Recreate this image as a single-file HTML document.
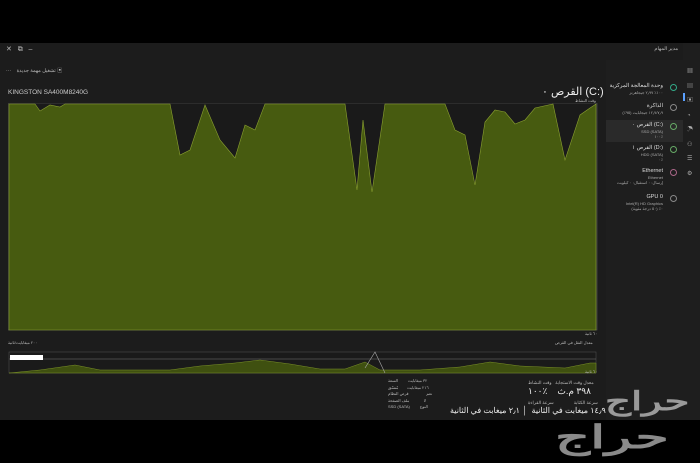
<!DOCTYPE html>
<html><head><meta charset="utf-8"><style>
body{margin:0;width:700px;height:463px;background:#000;overflow:hidden;font-family:"Liberation Sans","Noto Sans CJK SC",sans-serif;color:#ddd;position:relative}
.win{position:absolute;left:0;top:43px;width:700px;height:377px;background:#1c1c1c}
.t{position:absolute;font-size:5px;color:#bbb;white-space:nowrap}
.side{position:absolute;left:606px;top:60px;width:77px;height:360px;background:#1e1e1e}
.icons{position:absolute;left:683px;top:43px;width:17px;height:377px;background:#1e1e1e}
.item{position:absolute;right:20px;text-align:right;font-size:5.5px;color:#ddd;line-height:7px;white-space:nowrap}
.item small{display:block;font-size:4px;color:#aaa;line-height:5px}
.dot{position:absolute;right:6px;width:5px;height:5px;border-radius:50%;border:1px solid #6a8;}
.wm{position:absolute;color:#9a9a9a;font-weight:bold;font-family:"Liberation Sans","Noto Sans CJK SC",sans-serif;transform-origin:0 0;white-space:nowrap}
</style></head><body>
<div class="win">
<div class="t" style="left:6px;top:2px;font-size:7px">✕ &nbsp; ⧉ &nbsp; –</div>
<div class="t" style="right:22px;top:3px">مدير المهام</div>
<div style="position:absolute;right:6px;top:4px;width:6px;height:5px;background:#4a7fd0"></div>
<div class="t" style="left:6px;top:24px">··· &nbsp;&nbsp; تشغيل مهمة جديدة ▣</div>
<div class="t" style="right:22px;top:24px">الأداء</div>
<div class="t" style="left:8px;top:46px;font-size:6.5px;color:#ccc">KINGSTON SA400M8240G</div>
<div class="t" style="left:542px;top:42px;font-size:11px;color:#eee">القرص ٠ (C:)</div>
<div class="t" style="left:575px;top:55px;font-size:4px">وقت النشاط</div>
<svg style="position:absolute;left:8px;top:60px" width="590" height="230" viewBox="8 103 590 230">
<rect x="8" y="103" width="589" height="227" fill="#1a1a1a" stroke="#555" stroke-width="0.6"/>
<polygon fill="#475b10" stroke="#8aa030" stroke-width="0.6" points="9,104 35,104 40,111 50,105 60,107 65,104 170,104 180,155 190,150 205,105 220,140 235,158 245,125 255,130 265,104 345,104 357,190 363,120 372,192 385,104 445,104 455,130 465,135 475,185 485,122 495,110 505,112 515,124 525,120 535,108 553,104 565,160 580,115 590,108 596,104 596,330 9,330"/>
</svg>
<div class="t" style="left:585px;top:288px;font-size:4px">٦٠ ثانية</div>
<div class="t" style="left:8px;top:297px;font-size:4px">٢٠٠ ميغابايت/ثانية</div>
<div class="t" style="left:555px;top:297px;font-size:4px">معدل النقل في القرص</div>
<svg style="position:absolute;left:8px;top:302px" width="590" height="30" viewBox="8 345 590 30">
<rect x="9" y="352" width="587" height="21" fill="#1a1a1a" stroke="#555" stroke-width="0.5"/>
<line x1="9" y1="359" x2="596" y2="359" stroke="#777" stroke-width="0.5"/>
<polygon fill="#3f5010" stroke="#7a9028" stroke-width="0.5" points="9,373 40,370 75,365 100,370 170,370 200,366 235,363 260,360 290,364 320,369 345,369 365,362 380,370 420,370 460,367 490,362 520,366 565,368 590,363 596,363 596,373"/>
<polyline fill="none" stroke="#aaa" stroke-width="0.6" points="365,368 375,352 385,373"/>
<rect x="10" y="355" width="33" height="5" fill="#fff"/>
</svg>
<div class="t" style="left:585px;top:326px;font-size:4px">٦٠ ثانية</div>
<div class="t" style="left:528px;top:337px;font-size:4.5px">معدل وقت الاستجابة &nbsp; وقت النشاط</div>
<div class="t" style="left:528px;top:343px;font-size:9px;color:#eee">٣٩٨ م.ث &nbsp;&nbsp; ٪١٠٠</div>
<div class="t" style="left:528px;top:357px;font-size:4.5px">سرعة الكتابة &nbsp;&nbsp;&nbsp;&nbsp;&nbsp;&nbsp;&nbsp;&nbsp;&nbsp;&nbsp;&nbsp;&nbsp;&nbsp;&nbsp; سرعة القراءة</div>
<div class="t" style="left:450px;top:363px;font-size:8px;color:#eee">١٤٫٩ ميغابت في الثانية &nbsp;│ ٢٫١ ميغابت في الثانية</div>
<div class="t" style="left:388px;top:335px;font-size:4px;line-height:6.5px">٣٢ ميغابايت &nbsp;&nbsp;&nbsp;&nbsp;&nbsp;&nbsp;&nbsp; السعة<br>٢١٦ ميغابايت &nbsp;&nbsp;&nbsp;&nbsp;&nbsp;&nbsp; مُنسّق<br>نعم &nbsp;&nbsp;&nbsp;&nbsp;&nbsp;&nbsp;&nbsp;&nbsp;&nbsp;&nbsp;&nbsp;&nbsp;&nbsp;&nbsp; قرص النظام<br>لا &nbsp;&nbsp;&nbsp;&nbsp;&nbsp;&nbsp;&nbsp;&nbsp;&nbsp;&nbsp;&nbsp; ملف الصفحة<br>SSD (SATA) &nbsp;&nbsp;&nbsp;&nbsp;&nbsp;&nbsp;&nbsp; النوع</div>
</div>
<div class="side">
<div class="item" style="top:23px">وحدة المعالجة المركزية<small>١٠٠٪ ٢٫٩٧ جيجاهرتز</small></div><div class="dot" style="top:24px;border-color:#3a8"></div>
<div class="item" style="top:43px">الذاكرة<small>١٢٫٧/٧٫٩ جيجابايت (٩٥٪)</small></div><div class="dot" style="top:44px;border-color:#888"></div>
<div style="position:absolute;left:0;top:60px;width:77px;height:22px;background:#2a2a2a"></div>
<div class="item" style="top:62px">القرص ٠ (C:)<small>SSD (SATA)<br>١٠٠٪</small></div><div class="dot" style="top:63px;border-color:#6a6"></div>
<div class="item" style="top:85px">القرص ١ (D:)<small>HDD (SATA)<br>٠٪</small></div><div class="dot" style="top:86px;border-color:#6a6"></div>
<div class="item" style="top:108px">Ethernet<small>Ethernet<br>إرسال: ٠ استقبال: ٠ كيلوبت</small></div><div class="dot" style="top:109px;border-color:#a68"></div>
<div class="item" style="top:134px">GPU 0<small>Intel(R) HD Graphics<br>٠٪ (٥٠ درجة مئوية)</small></div><div class="dot" style="top:135px;border-color:#888"></div>
</div>
<div class="icons">
<div class="t" style="left:4px;top:22px;font-size:6px;line-height:14.5px;color:#aaa">▦<br>▤<br>▣<br>◔<br>☂<br>⚇<br>☰<br>⚙</div>
<div style="position:absolute;left:0;top:50px;width:1.5px;height:8px;background:#5aa0ff"></div>
</div>
<div class="wm" style="left:605px;top:386px;font-size:26px;transform:scaleX(1.55)">حراج</div>
<div class="wm" style="left:555px;top:418px;font-size:32px;color:#8a8a8a;transform:scaleX(1.7)">حراج</div>
</body></html>
